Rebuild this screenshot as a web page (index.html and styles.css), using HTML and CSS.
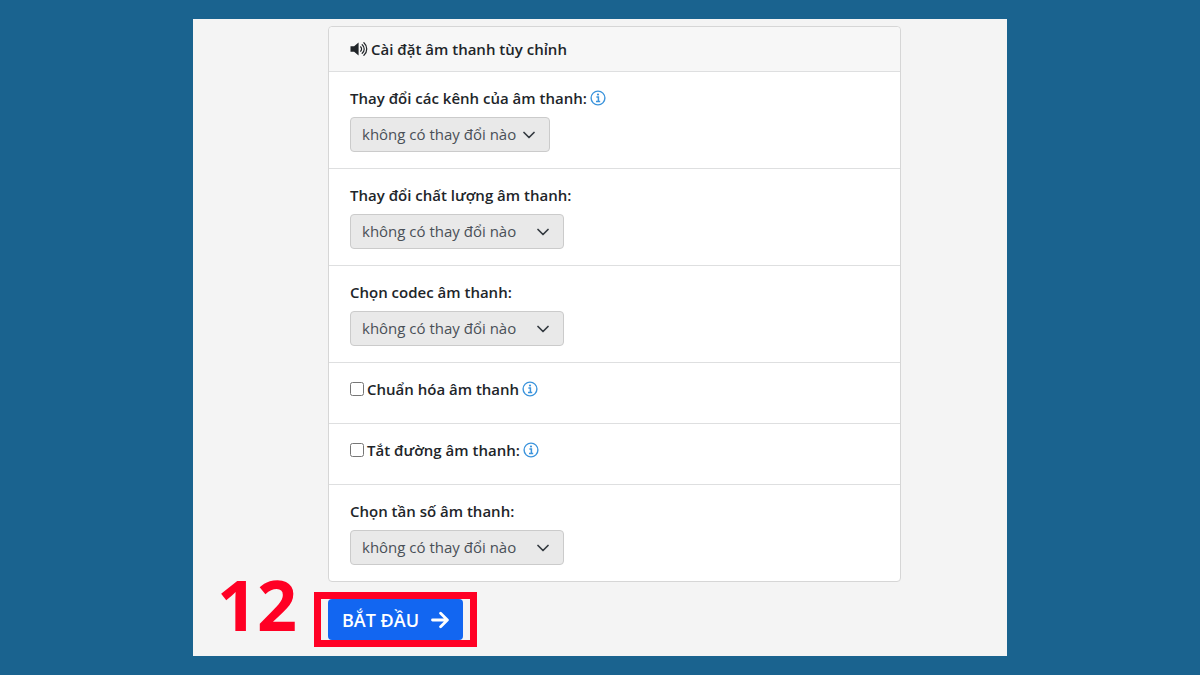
FILE: index.html
```html
<!DOCTYPE html>
<html lang="vi">
  <head>
    <meta charset="UTF-8" />
    <meta name="viewport" content="width=device-width, initial-scale=1.0" />
    <title>Cài đặt âm thanh</title>
    <link rel="stylesheet" href="styles.css">
  </head>
  <body>
    <svg class="defs" aria-hidden="true">
      <symbol id="icon-info" viewBox="0 0 16 16">
        <circle cx="8" cy="8" r="6.9" fill="none" stroke="currentColor" stroke-width="1.4" />
        <path d="M6.4 6.9h2v4.2M6 11.4h4.2" fill="none" stroke="currentColor" stroke-width="1.5" />
        <circle cx="8" cy="4.5" r="1.1" fill="currentColor" />
      </symbol>
    </svg>

    <main class="panel">
      <form class="card">
        <h2 class="card-header">
          <svg class="icon-sound" viewBox="0 0 18 16" aria-hidden="true">
            <path d="M0.5 5.2h3.6L8.6 1.4v13.2L4.1 10.8H0.5z" fill="currentColor" />
            <path d="M10.6 5.8a3 3 0 0 1 0 4.4M12.2 3.7a5.6 5.6 0 0 1 0 8.6M13.9 1.7a8.4 8.4 0 0 1 0 12.6" fill="none" stroke="currentColor" stroke-width="1.2" stroke-linecap="round" />
          </svg>
          Cài đặt âm thanh tùy chỉnh
        </h2>

        <div class="card-item">
          <div class="label-row">
            <label for="channels">Thay đổi các kênh của âm thanh:</label>
            <svg class="icon-info"><use href="#icon-info" /></svg>
          </div>
          <select id="channels" class="select select-narrow">
            <option>không có thay đổi nào</option>
          </select>
        </div>

        <div class="card-item">
          <div class="label-row">
            <label for="quality">Thay đổi chất lượng âm thanh:</label>
          </div>
          <select id="quality" class="select">
            <option>không có thay đổi nào</option>
          </select>
        </div>

        <div class="card-item">
          <div class="label-row">
            <label for="codec">Chọn codec âm thanh:</label>
          </div>
          <select id="codec" class="select">
            <option>không có thay đổi nào</option>
          </select>
        </div>

        <div class="card-item check-item">
          <div class="label-row">
            <input type="checkbox" id="normalize" class="checkbox">
            <label for="normalize">Chuẩn hóa âm thanh</label>
            <svg class="icon-info"><use href="#icon-info" /></svg>
          </div>
        </div>

        <div class="card-item check-item">
          <div class="label-row">
            <input type="checkbox" id="mute" class="checkbox">
            <label for="mute">Tắt đường âm thanh:</label>
            <svg class="icon-info"><use href="#icon-info" /></svg>
          </div>
        </div>

        <div class="card-item">
          <div class="label-row">
            <label for="frequency">Chọn tần số âm thanh:</label>
          </div>
          <select id="frequency" class="select">
            <option>không có thay đổi nào</option>
          </select>
        </div>
      </form>

      <div class="actions">
        <span class="step">12</span>
        <div class="highlight">
          <button type="button" class="start-btn">
            BẮT ĐẦU
            <svg class="icon-arrow" viewBox="0 0 18 18" aria-hidden="true">
              <path d="M1.5 9h14.5M9.6 2.2L16.4 9l-6.8 6.8" fill="none" stroke="currentColor" stroke-width="2.8" stroke-linecap="round" stroke-linejoin="round" />
            </svg>
          </button>
        </div>
      </div>
    </main>
  </body>
</html>
```

FILE: styles.css
```css
* {
  margin: 0;
  padding: 0;
  box-sizing: border-box;
}

body {
  background-color: #1a638f;
  padding: 19px 16%;
  font-family: "Open Sans", "Noto Sans", sans-serif;
  font-size: 15px;
  line-height: 22px;
  color: #212529;
}

.defs {
  display: none;
}

.panel {
  background-color: #f4f4f4;
  margin: 0 1px;
  padding: 7px 0 9px;
}

/* Settings card */
.card {
  margin: 0 106px 0 135px;
  background-color: #fff;
  border: 1px solid #d6d6d6;
  border-radius: 4px;
}

.card-header {
  display: flex;
  align-items: center;
  gap: 3px;
  padding: 11px 21px;
  background-color: #f7f7f7;
  border-radius: 4px 4px 0 0;
  font-size: 15px;
  font-weight: 600;
}

.card-item {
  padding: 15px 21px 16px;
  border-top: 1px solid #dedfe0;
}

.label-row {
  display: flex;
  align-items: center;
  gap: 3px;
  font-weight: 600;
}

.select {
  display: block;
  appearance: none;
  width: 214px;
  height: 35px;
  margin-top: 8px;
  padding: 0 32px 2px 11px;
  border: 1px solid #cbcbcb;
  border-radius: 4px;
  background: #e9e9e9 url("data:image/svg+xml,%3Csvg xmlns='http://www.w3.org/2000/svg' viewBox='0 0 12 8'%3E%3Cpath d='M1 1.5l5 5 5-5' fill='none' stroke='%23343a40' stroke-width='1.7' stroke-linecap='round' stroke-linejoin='round'/%3E%3C/svg%3E") no-repeat right 14px center / 12px 8px;
  font-family: inherit;
  font-size: 15px;
  color: #495057;
}

.select-narrow {
  width: 200px;
}

.check-item {
  padding-bottom: 23px;
}

.checkbox {
  width: 14px;
  height: 14px;
}

.icon-info {
  width: 16px;
  height: 16px;
  color: #3c94dc;
}

.icon-sound {
  width: 18px;
  height: 16px;
}

/* Start button with step number */
.actions {
  display: flex;
  align-items: center;
  gap: 14px;
  padding: 10px 24px 0;
}

.step {
  width: 83px;
  padding-bottom: 30px;
  font-size: 70px;
  line-height: 25px;
  font-weight: 700;
  color: #ff0024;
}

.highlight {
  padding: 0 7px;
  border: 7px solid #ff0024;
}

.start-btn {
  display: flex;
  align-items: center;
  gap: 12px;
  height: 41px;
  padding: 0 14px;
  border: none;
  border-radius: 4px;
  background-color: #1266f1;
  color: #fff;
  font-family: inherit;
  font-size: 18px;
  font-weight: 600;
}

.icon-arrow {
  width: 18px;
  height: 18px;
}
```
